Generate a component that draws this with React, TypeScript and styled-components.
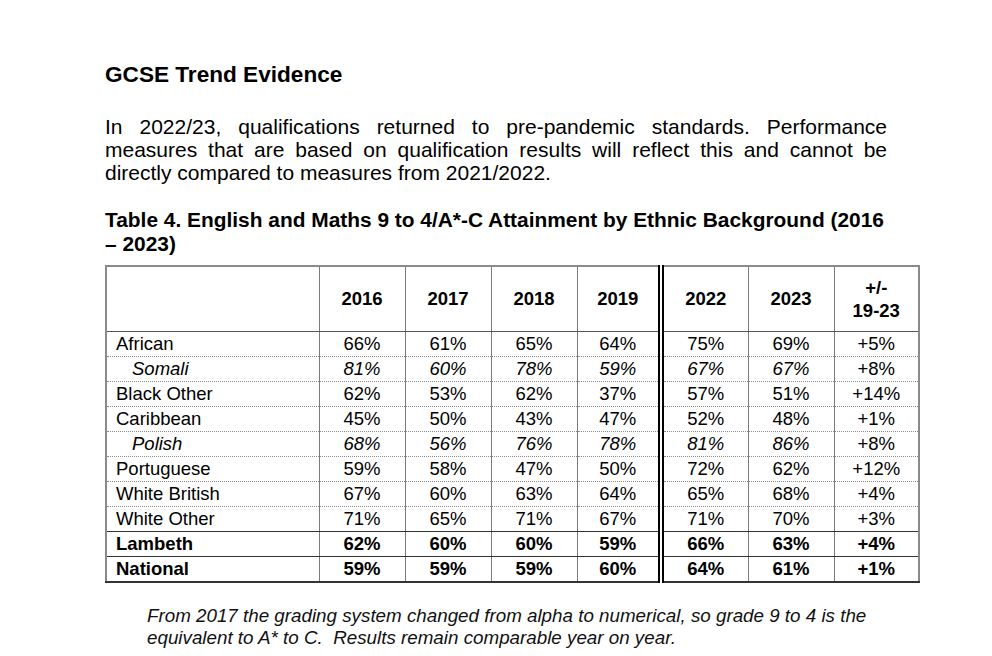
import React from "react";
import styled, { createGlobalStyle } from "styled-components";

const Global = createGlobalStyle`
  html, body { margin: 0; padding: 0; background: #ffffff; }
  body { font-family: "Liberation Sans", Arial, sans-serif; color: #000; }
`;

const Page = styled.main`
  width: 992px;
  height: 656px;
  box-sizing: border-box;
  padding: 62px 0 0 105px;
  overflow: hidden;
`;

const Title = styled.h1`
  margin: 0;
  font-size: 22.6px;
  line-height: 26px;
  font-weight: 700;
`;

const Para = styled.p`
  margin: 27px 0 0;
  width: 782px;
  font-size: 21px;
  line-height: 23px;
  text-align: justify;
`;

const Caption = styled.h2`
  margin: 24px 0 0;
  width: 782px;
  font-size: 20.9px;
  line-height: 24px;
  font-weight: 700;
`;

const Table = styled.table`
  margin-top: 9px;
  width: 813px;
  table-layout: fixed;
  border-collapse: collapse;
  border-top: 2px solid #8a8a8a;
  border-left: 2px solid #8a8a8a;
  border-right: 2px solid #8a8a8a;
  border-bottom: 2px solid #333;
  font-size: 18.5px;
`;

type Line = "dotted" | "solid" | "header";

const Row = styled.tr<{ $line: Line; $bold?: boolean }>`
  height: 25px;
  font-weight: ${(p) => (p.$bold ? 700 : 400)};
  & > td {
    border-bottom: ${(p) =>
      p.$line === "dotted" ? "1px dotted #8c8c8c" : p.$line === "header" ? "1px solid #555" : "1px solid #333"};
  }
`;

const HeadRow = styled.tr`
  height: 65px;
`;

const HeadCell = styled.th<{ $double?: boolean }>`
  font-size: 18.5px;
  font-weight: 700;
  line-height: 23px;
  text-align: center;
  vertical-align: middle;
  padding: 0;
  border-bottom: 1px solid #555;
  border-right: ${(p) => (p.$double ? "6px double #000" : "1px solid #7a7a7a")};
`;

const LabelCell = styled.td<{ $sub?: boolean }>`
  padding: 0 0 0 ${(p) => (p.$sub ? 25 : 9)}px;
  line-height: 24px;
  font-style: ${(p) => (p.$sub ? "italic" : "normal")};
  border-right: 1px solid #7a7a7a;
  white-space: nowrap;
`;

const Cell = styled.td<{ $sub?: boolean; $double?: boolean }>`
  padding: 0;
  line-height: 24px;
  text-align: center;
  font-style: ${(p) => (p.$sub ? "italic" : "normal")};
  border-right: ${(p) => (p.$double ? "6px double #000" : "1px solid #7a7a7a")};
`;

const Note = styled.p`
  margin: 22px 0 0 42px;
  width: 740px;
  font-size: 18.8px;
  line-height: 22px;
  font-style: italic;
  color: #111;
`;

const years = ["2016", "2017", "2018", "2019", "2022", "2023"];
const widths = [213, 86, 86, 86, 84, 87, 86, 85];

type RowData = { name: string; vals: string[]; sub?: boolean; bold?: boolean };

const rows: RowData[] = [
  { name: "African", vals: ["66%", "61%", "65%", "64%", "75%", "69%", "+5%"] },
  { name: "Somali", sub: true, vals: ["81%", "60%", "78%", "59%", "67%", "67%", "+8%"] },
  { name: "Black Other", vals: ["62%", "53%", "62%", "37%", "57%", "51%", "+14%"] },
  { name: "Caribbean", vals: ["45%", "50%", "43%", "47%", "52%", "48%", "+1%"] },
  { name: "Polish", sub: true, vals: ["68%", "56%", "76%", "78%", "81%", "86%", "+8%"] },
  { name: "Portuguese", vals: ["59%", "58%", "47%", "50%", "72%", "62%", "+12%"] },
  { name: "White British", vals: ["67%", "60%", "63%", "64%", "65%", "68%", "+4%"] },
  { name: "White Other", vals: ["71%", "65%", "71%", "67%", "71%", "70%", "+3%"] },
  { name: "Lambeth", bold: true, vals: ["62%", "60%", "60%", "59%", "66%", "63%", "+4%"] },
  { name: "National", bold: true, vals: ["59%", "59%", "59%", "60%", "64%", "61%", "+1%"] },
];

export default function App() {
  return (
    <>
      <Global />
      <Page>
        <Title>GCSE Trend Evidence</Title>
        <Para>
          In 2022/23, qualifications returned to pre-pandemic standards. Performance measures that are
          based on qualification results will reflect this and cannot be directly compared to measures
          from 2021/2022.
        </Para>
        <Caption>
          Table 4. English and Maths 9 to 4/A*-C Attainment by Ethnic Background (2016 – 2023)
        </Caption>
        <Table>
          <colgroup>
            {widths.map((w, i) => (
              <col key={i} style={{ width: w }} />
            ))}
          </colgroup>
          <thead>
            <HeadRow>
              <HeadCell />
              {years.map((y) => (
                <HeadCell key={y} $double={y === "2019"}>
                  {y}
                </HeadCell>
              ))}
              <HeadCell>
                +/-
                <br />
                19-23
              </HeadCell>
            </HeadRow>
          </thead>
          <tbody>
            {rows.map((r, i) => {
              const next = rows[i + 1];
              const line: Line = next && (next.bold || r.bold) ? "solid" : "dotted";
              return (
                <Row key={r.name} $line={line} $bold={r.bold}>
                  <LabelCell $sub={r.sub}>{r.name}</LabelCell>
                  {r.vals.map((v, j) => (
                    <Cell key={j} $sub={r.sub && j < 6} $double={j === 3}>
                      {v}
                    </Cell>
                  ))}
                </Row>
              );
            })}
          </tbody>
        </Table>
        <Note>
          From 2017 the grading system changed from alpha to numerical, so grade 9 to 4 is the equivalent
          to A* to C.&nbsp; Results remain comparable year on year.
        </Note>
      </Page>
    </>
  );
}
